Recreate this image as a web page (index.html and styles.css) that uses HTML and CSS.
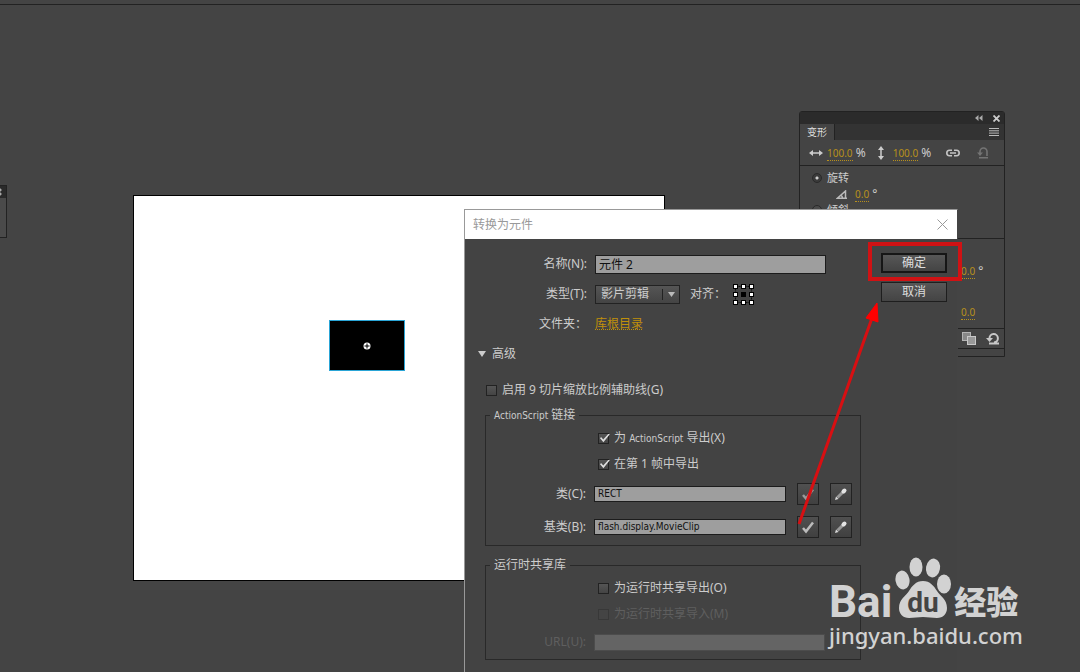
FILE: index.html
```html
<!DOCTYPE html>
<html lang="zh-CN">
<head>
  <meta charset="UTF-8">
  <meta name="viewport" content="width=device-width, initial-scale=1.0">
  <title>转换为元件</title>
  <link rel="stylesheet" href="styles.css">
</head>
<body>
  <div class="topbar"></div>

  <div class="workspace">
    <!-- docked panel, only its edge is visible -->
    <div class="side-panel">
      <div class="side-panel-head"></div>
    </div>

    <div class="stage">
      <div class="shape">
        <svg width="8" height="8" viewBox="0 0 8 8">
          <circle cx="4" cy="4" r="3.5" fill="#fff"/>
          <path d="M4 1.5v5M1.5 4h5" stroke="#000" stroke-width="1"/>
        </svg>
      </div>
    </div>

    <section class="panel">
      <div class="panel-head">
        <button class="icon-btn" aria-label="折叠">
          <svg width="8" height="6" viewBox="0 0 8 6" fill="#aaa"><path d="M3.500 0v6L0 3zM7.500 0v6L4 3z"/></svg>
        </button>
        <button class="icon-btn" aria-label="关闭">
          <svg width="7" height="7" viewBox="0 0 7 7" stroke="#ccc" stroke-width="1.800"><path d="M.5.5l6 6M6.500.5l-6 6"/></svg>
        </button>
      </div>
      <div class="panel-tabs">
        <span class="tab">变形</span>
        <button class="icon-btn" aria-label="菜单">
          <svg width="10" height="8" viewBox="0 0 10 8" stroke="#bbb"><path d="M0 .5h10M0 2.800h10M0 5.100h10M0 7.500h10"/></svg>
        </button>
      </div>
      <div class="panel-row scale-row">
        <svg width="14" height="8" viewBox="0 0 14 8"><path d="M0 4l4-3v6zM14 4l-4-3v6z" fill="#ccc"/><path d="M3 4h8" stroke="#ccc" stroke-width="1.500"/></svg>
        <span class="num-group"><a href="#" class="num">100.0</a> %</span>
        <svg class="v-arrow" width="8" height="14" viewBox="0 0 8 14"><path d="M4 0L1 4h6zM4 14l-3-4h6z" fill="#ccc"/><path d="M4 3v8" stroke="#ccc" stroke-width="1.500"/></svg>
        <span class="num-group"><a href="#" class="num">100.0</a> %</span>
        <button class="icon-btn push" aria-label="约束">
          <svg width="14" height="8" viewBox="0 0 14 8" fill="none" stroke="#c4c4c4" stroke-width="1.600"><path d="M6 1.300H3.500a2.700 2.700 0 0 0 0 5.400H6M8 1.300h2.500a2.700 2.700 0 0 1 0 5.400H8M4 4h6"/></svg>
        </button>
        <button class="icon-btn" aria-label="重置">
          <svg width="14" height="12" viewBox="0 0 14 12" fill="none" stroke="#747474" stroke-width="1.600"><path d="M4 7V4.500a3.500 3.500 0 0 1 7 0V9M3 10.800h9"/><path d="M1 5.500h6L4 9z" fill="#747474" stroke="none"/></svg>
        </button>
      </div>
      <div class="panel-section">
        <label class="radio-row"><input type="radio" name="mode" class="radio" checked>旋转</label>
        <div class="panel-row angle-row">
          <svg width="12" height="9" viewBox="0 0 12 9" fill="none" stroke="#bbb" stroke-width="1.500"><path d="M11 8.200H1.500L9.500 1v7M5 5a5 5 0 0 1 1.500 3"/></svg>
          <span class="num-group"><a href="#" class="num">0.0</a> °</span>
        </div>
        <label class="radio-row"><input type="radio" name="mode" class="radio">倾斜</label>
      </div>
      <div class="panel-section depth">
        <span class="num-group"><a href="#" class="num">0.0</a> °</span>
        <span class="num-group"><a href="#" class="num">0.0</a></span>
      </div>
      <div class="panel-foot">
        <button class="icon-btn" aria-label="复制选区和变形">
          <svg width="14" height="13" viewBox="0 0 14 13"><rect x=".5" y=".5" width="8" height="8" fill="#888" stroke="#b5b5b5"/><rect x="5.500" y="4.500" width="8" height="8" fill="#999" stroke="#c8c8c8"/></svg>
        </button>
        <button class="icon-btn" aria-label="取消变形">
          <svg width="14" height="13" viewBox="0 0 14 13" fill="none" stroke="#c8c8c8" stroke-width="2"><path d="M3.500 6.500a4.200 4.200 0 1 1 4.500 4M3 11.500h10"/><path d="M0 6h7L3.500 10z" fill="#c8c8c8" stroke="none"/></svg>
        </button>
      </div>
    </section>

    <form class="dialog">
      <header class="dialog-title">
        <span>转换为元件</span>
        <button type="button" class="icon-btn" aria-label="关闭">
          <svg width="11" height="11" viewBox="0 0 11 11" stroke="#999"><path d="M.5.5l10 10M10.500.5l-10 10"/></svg>
        </button>
      </header>

      <div class="dialog-top">
        <div class="fields">
          <div class="row">
            <label class="label" for="name">名称(N):</label>
            <input class="text-input" id="name" type="text" value="元件 2">
          </div>
          <div class="row">
            <label class="label" for="type">类型(T):</label>
            <div class="select">
              <select id="type">
                <option>影片剪辑</option>
                <option>按钮</option>
                <option>图形</option>
              </select>
              <svg class="select-arrow" width="7" height="5" viewBox="0 0 7 5"><path d="M0 0h7L3.500 5z" fill="#bbb"/></svg>
            </div>
            <span class="align-label">对齐：</span>
            <button type="button" class="icon-btn" aria-label="对齐">
              <svg width="21" height="21" viewBox="0 0 21 21">
                <path d="M2.500 2.500h16v16h-16z" fill="none" stroke="#111" stroke-dasharray="2 1"/>
                <path d="M0 0h5v5H0zM8 0h5v5H8zM16 0h5v5h-5zM0 8h5v5H0zM16 8h5v5h-5zM0 16h5v5H0zM8 16h5v5H8zM16 16h5v5h-5zM8 8h5v5H8z" fill="#000"/>
                <path d="M1 1h3v3H1zM9 1h3v3H9zM17 1h3v3h-3zM1 9h3v3H1zM17 9h3v3h-3zM1 17h3v3H1zM9 17h3v3H9zM17 17h3v3h-3z" fill="#fff"/>
              </svg>
            </button>
          </div>
          <div class="row">
            <span class="label">文件夹：</span>
            <a href="#" class="folder">库根目录</a>
          </div>
        </div>
        <div class="buttons">
          <button type="submit" class="btn btn-default">确定</button>
          <button type="button" class="btn">取消</button>
        </div>
      </div>

      <button type="button" class="advanced">
        <svg width="8" height="6" viewBox="0 0 8 6"><path d="M0 0h8L4 6z" fill="#ccc"/></svg>
        高级
      </button>
      <label class="check-row slice"><input type="checkbox" class="check"><span>启用 9 切片缩放比例辅助线(G)</span></label>

      <fieldset class="group">
        <legend><span class="en">ActionScript</span> 链接</legend>
        <label class="check-row"><input type="checkbox" class="check" checked><span>为 <span class="en">ActionScript</span> 导出(X)</span></label>
        <label class="check-row"><input type="checkbox" class="check" checked><span>在第 1 帧中导出</span></label>
        <div class="row tall">
          <label class="label" for="cls">类(C):</label>
          <input class="text-input small" id="cls" type="text" value="RECT">
          <button type="button" class="tool" aria-label="验证类"><svg width="14" height="14" viewBox="0 0 14 14"><path d="M2 8l3 3.500L12 2.500" fill="none" stroke="#999" stroke-width="2.500"/></svg></button>
          <button type="button" class="tool" aria-label="编辑类"><svg width="14" height="14" viewBox="0 0 14 14"><path d="M1 13l1-3.500L4.500 12z" fill="#ddd"/><path d="M3.500 10.500L9 5" stroke="#999" stroke-width="3"/><path d="M9.500 4.500l1-1" stroke="#e4e4e4" stroke-width="4" stroke-linecap="round"/></svg></button>
        </div>
        <div class="row tall">
          <label class="label" for="base">基类(B):</label>
          <input class="text-input small" id="base" type="text" value="flash.display.MovieClip">
          <button type="button" class="tool" aria-label="验证基类"><svg width="14" height="14" viewBox="0 0 14 14"><path d="M2 8l3 3.500L12 2.500" fill="none" stroke="#bbb" stroke-width="2.500"/></svg></button>
          <button type="button" class="tool" aria-label="编辑基类"><svg width="14" height="14" viewBox="0 0 14 14"><path d="M1 13l1-3.500L4.500 12z" fill="#ddd"/><path d="M3.500 10.500L9 5" stroke="#999" stroke-width="3"/><path d="M9.500 4.500l1-1" stroke="#e4e4e4" stroke-width="4" stroke-linecap="round"/></svg></button>
        </div>
      </fieldset>

      <fieldset class="group">
        <legend>运行时共享库</legend>
        <label class="check-row"><input type="checkbox" class="check">为运行时共享导出(O)</label>
        <label class="check-row disabled"><input type="checkbox" class="check" disabled>为运行时共享导入(M)</label>
        <div class="row disabled">
          <label class="label" for="url">URL(U):</label>
          <input class="text-input url" id="url" type="text" disabled>
        </div>
      </fieldset>
    </form>

    <svg class="annotation" width="180" height="300" viewBox="0 0 180 300">
      <rect x="80" y="4" width="90" height="35" fill="none" stroke="#d01214" stroke-width="4"/>
      <path d="M9 284L82 78" stroke="#d80f12" stroke-width="3"/>
      <path d="M87 63l1 19-12-4z" fill="#f00" stroke="#f00"/>
    </svg>

    <div class="watermark">
      <div class="brand">
        <span class="brand-bai">Bai</span>
        <span class="paw">
          <svg width="56" height="62" viewBox="0 0 56 62" fill="#d2d2d2">
            <ellipse cx="7.500" cy="23" rx="7" ry="9.500" transform="rotate(-10 7.500 23)"/>
            <ellipse cx="21" cy="10" rx="6.500" ry="9.500"/>
            <ellipse cx="38" cy="11" rx="7" ry="9.500" transform="rotate(10 38 11)"/>
            <ellipse cx="49" cy="27" rx="7" ry="9.500"/>
            <path d="M28 24c-7 0-11 5-14 10-3 5-10 8-10 17 0 6 4 10 10 10 5 0 9-1 14-1s9 1 14 1c6 0 10-4 10-10 0-9-7-12-10-17-3-5-7-10-14-10z"/>
          </svg>
          <span class="paw-text">du</span>
        </span>
        <span class="brand-cn">经验</span>
      </div>
      <div class="site">jingyan.baidu.com</div>
    </div>
  </div>
</body>
</html>
```
FILE: styles.css
```css
* {
  box-sizing: border-box;
}
body {
  margin: 0;
  height: 100vh;
  overflow: hidden;
  display: flex;
  flex-direction: column;
  background-color: #444;
  color: #ccc;
  font-family: "Noto Sans", "Noto Sans CJK SC", sans-serif;
  font-size: 12px;
  line-height: 16px;
}
button, input, select {
  font: inherit;
  color: inherit;
}
svg {
  display: block;
  flex-shrink: 0;
}
.topbar {
  height: 5px;
  border-bottom: 1px solid #222;
}
.workspace {
  flex: 1;
}
.icon-btn {
  background: none;
  border: none;
  padding: 0;
  cursor: pointer;
}
.en {
  font-family: "DejaVu Sans Condensed", "DejaVu Sans", sans-serif;
  font-size: 10px;
}

/* stage */
.side-panel {
  position: absolute;
  left: 0;
  top: 185px;
  width: 7px;
  height: 53px;
  border: 1px solid #222;
  border-left: none;
  background-color: #4a4a4a;
}
.side-panel-head {
  height: 12px;
  background: radial-gradient(circle at 0 4px, #aaa 1px, transparent 2px), radial-gradient(circle at 0 8px, #aaa 1px, #2a2a2a 2px);
}
.stage {
  position: absolute;
  left: 133px;
  top: 195px;
  width: 532px;
  height: 386px;
  border: 1px solid #000;
  background-color: #fff;
}
.shape {
  position: absolute;
  left: 195px;
  top: 124px;
  width: 76px;
  height: 51px;
  display: flex;
  align-items: center;
  justify-content: center;
  background-color: #000;
  border: 1px solid #2aa5d6;
}

/* transform panel */
.panel {
  position: absolute;
  left: 799px;
  top: 111px;
  width: 206px;
  border: 1px solid #222;
  border-radius: 3px 3px 0 0;
  padding-bottom: 7px;
  background-color: #444;
  font-size: 10px;
}
.panel-head {
  display: flex;
  justify-content: flex-end;
  align-items: center;
  gap: 10px;
  height: 12px;
  padding-right: 4px;
  background-color: #2b2b2b;
}
.panel-tabs {
  display: flex;
  justify-content: space-between;
  align-items: center;
  height: 16px;
  padding-right: 5px;
  background-color: #333;
}
.tab {
  padding: 0 7px;
  background-color: #444;
  border-right: 1px solid #222;
  color: #ddd;
}
.panel-row {
  display: flex;
  align-items: center;
}
.scale-row {
  height: 26px;
  padding: 0 14px 0 9px;
  gap: 4px;
  border-bottom: 1px solid #222;
}
.v-arrow {
  margin: 0 4px 0 7px;
}
.push {
  margin: 0 12px 0 auto;
}
.num {
  color: #b8901c;
  font-size: 10px;
  text-decoration: none;
  border-bottom: 1px dotted #b8901c;
}
.num-group {
  font-size: 12px;
  line-height: 12px;
  white-space: nowrap;
}
.panel-section {
  height: 73px;
  padding: 4px 12px;
  overflow: hidden;
  border-bottom: 1px solid #222;
}
.radio-row {
  display: flex;
  align-items: center;
  gap: 5px;
  height: 16px;
  font-size: 11px;
}
.radio {
  appearance: none;
  width: 10px;
  height: 10px;
  margin: 0;
  border: 1px solid #292929;
  border-radius: 50%;
  background-color: #4a4a4a;
}
.radio:checked {
  background: radial-gradient(circle, #ccc 0 1px, #3a3a3a 2px);
}
.angle-row {
  height: 16px;
  padding-left: 24px;
  gap: 7px;
}
.depth {
  display: grid;
  grid-template-columns: 24px;
  justify-content: end;
  align-content: end;
  gap: 29px;
  height: 90px;
  padding: 8px 19px 10px;
}
.panel-foot {
  display: flex;
  justify-content: flex-end;
  align-items: center;
  gap: 10px;
  height: 20px;
  padding-right: 4px;
  border-bottom: 1px solid #222;
}

/* dialog */
.dialog {
  position: absolute;
  left: 464px;
  top: 209px;
  width: 494px;
  padding-bottom: 24px;
  border: 1px solid #999;
  border-right-color: #444;
  background-color: #434343;
}
.dialog-title {
  display: flex;
  justify-content: space-between;
  align-items: center;
  height: 29px;
  padding: 0 9px 0 8px;
  background-color: #fff;
  color: #999;
}
.dialog-top {
  display: flex;
  justify-content: space-between;
  padding: 10px 10px 0 0;
}
.fields {
  flex: 1;
}
.row {
  display: flex;
  align-items: center;
  height: 30px;
}
.label {
  width: 122px;
  margin-right: 8px;
  text-align: right;
  white-space: nowrap;
}
.group .label {
  width: 100px;
}
.text-input {
  width: 231px;
  height: 19px;
  padding: 0 3px;
  border: 1px solid #1c1c1c;
  border-radius: 0;
  background-color: #9e9e9e;
  color: #111;
}
.text-input.small {
  width: 192px;
  height: 16px;
  font-family: "DejaVu Sans Condensed", "DejaVu Sans", sans-serif;
  font-size: 10px;
}
.text-input.url {
  height: 17px;
  border-color: #4c4c4c;
  background-color: #646464;
}
.select {
  position: relative;
}
.select select {
  appearance: none;
  display: block;
  width: 85px;
  height: 19px;
  padding: 0 5px;
  border: 1px solid #222;
  border-radius: 0;
  background: linear-gradient(#222, #222) 66px 3px / 1px 11px no-repeat, linear-gradient(#555, #444);
}
.select-arrow {
  position: absolute;
  right: 5px;
  top: 7px;
  pointer-events: none;
}
.align-label {
  margin: 0 7px 0 10px;
}
.folder {
  color: #c0900a;
  text-decoration: underline dotted;
}
.buttons {
  display: flex;
  flex-direction: column;
  gap: 9px;
  padding-top: 4px;
}
.btn {
  width: 66px;
  height: 20px;
  padding: 0;
  border: 1px solid #1e1e1e;
  background: linear-gradient(#575757, #444);
  color: #ddd;
  line-height: 16px;
  cursor: pointer;
}
.btn-default {
  border-width: 2px;
  border-color: #161616;
}
.advanced {
  display: flex;
  align-items: center;
  gap: 6px;
  height: 30px;
  padding: 0 13px;
  border: none;
  background: none;
}
.check-row {
  display: flex;
  align-items: center;
  gap: 5px;
  height: 26px;
}
.slice {
  margin: 8px 0 2px;
  padding-left: 21px;
}
.check {
  appearance: none;
  width: 11px;
  height: 11px;
  margin: 0;
  border: 1px solid #222;
  background: linear-gradient(#555, #444);
}
.check:checked::before {
  content: "";
  display: block;
  width: 11px;
  height: 9px;
  background-color: #ddd;
  clip-path: polygon(8% 50%, 22% 42%, 38% 68%, 88% 0, 98% 8%, 40% 98%);
}
.group {
  margin: 0 96px 0 20px;
  padding: 0 0 2px;
  border: 1px solid #292929;
}
.group + .group {
  margin-top: 9px;
}
.group legend {
  margin-left: 4px;
  padding: 2px 4px 0;
  height: 20px;
}
.group .check-row {
  padding-left: 112px;
}
.tall {
  height: 33px;
}
.tool {
  display: flex;
  align-items: center;
  justify-content: center;
  width: 22px;
  height: 22px;
  margin-left: 11px;
  padding: 0;
  border: 1px solid #222;
  background: linear-gradient(#505050, #404040);
}
.disabled {
  color: #5f5f5f;
}
.disabled .check {
  border-color: #383838;
  background: #444;
}

/* overlays */
.annotation {
  position: absolute;
  left: 790px;
  top: 240px;
  pointer-events: none;
}
.watermark {
  position: absolute;
  left: 829px;
  top: 557px;
  color: #d2d2d2;
}
.brand {
  display: flex;
  align-items: flex-end;
  height: 62px;
}
.brand-bai {
  font: bold 44px/34px Roboto, sans-serif;
}
.paw {
  position: relative;
  margin: 0 3px;
}
.paw-text {
  position: absolute;
  left: 12px;
  bottom: 2px;
  color: #444;
  font: bold 28px/28px Roboto, sans-serif;
}
.brand-cn {
  font: 900 32px/38px "Noto Sans CJK SC", sans-serif;
}
.site {
  font: 500 22px/32px "Noto Sans", sans-serif;
}
```
